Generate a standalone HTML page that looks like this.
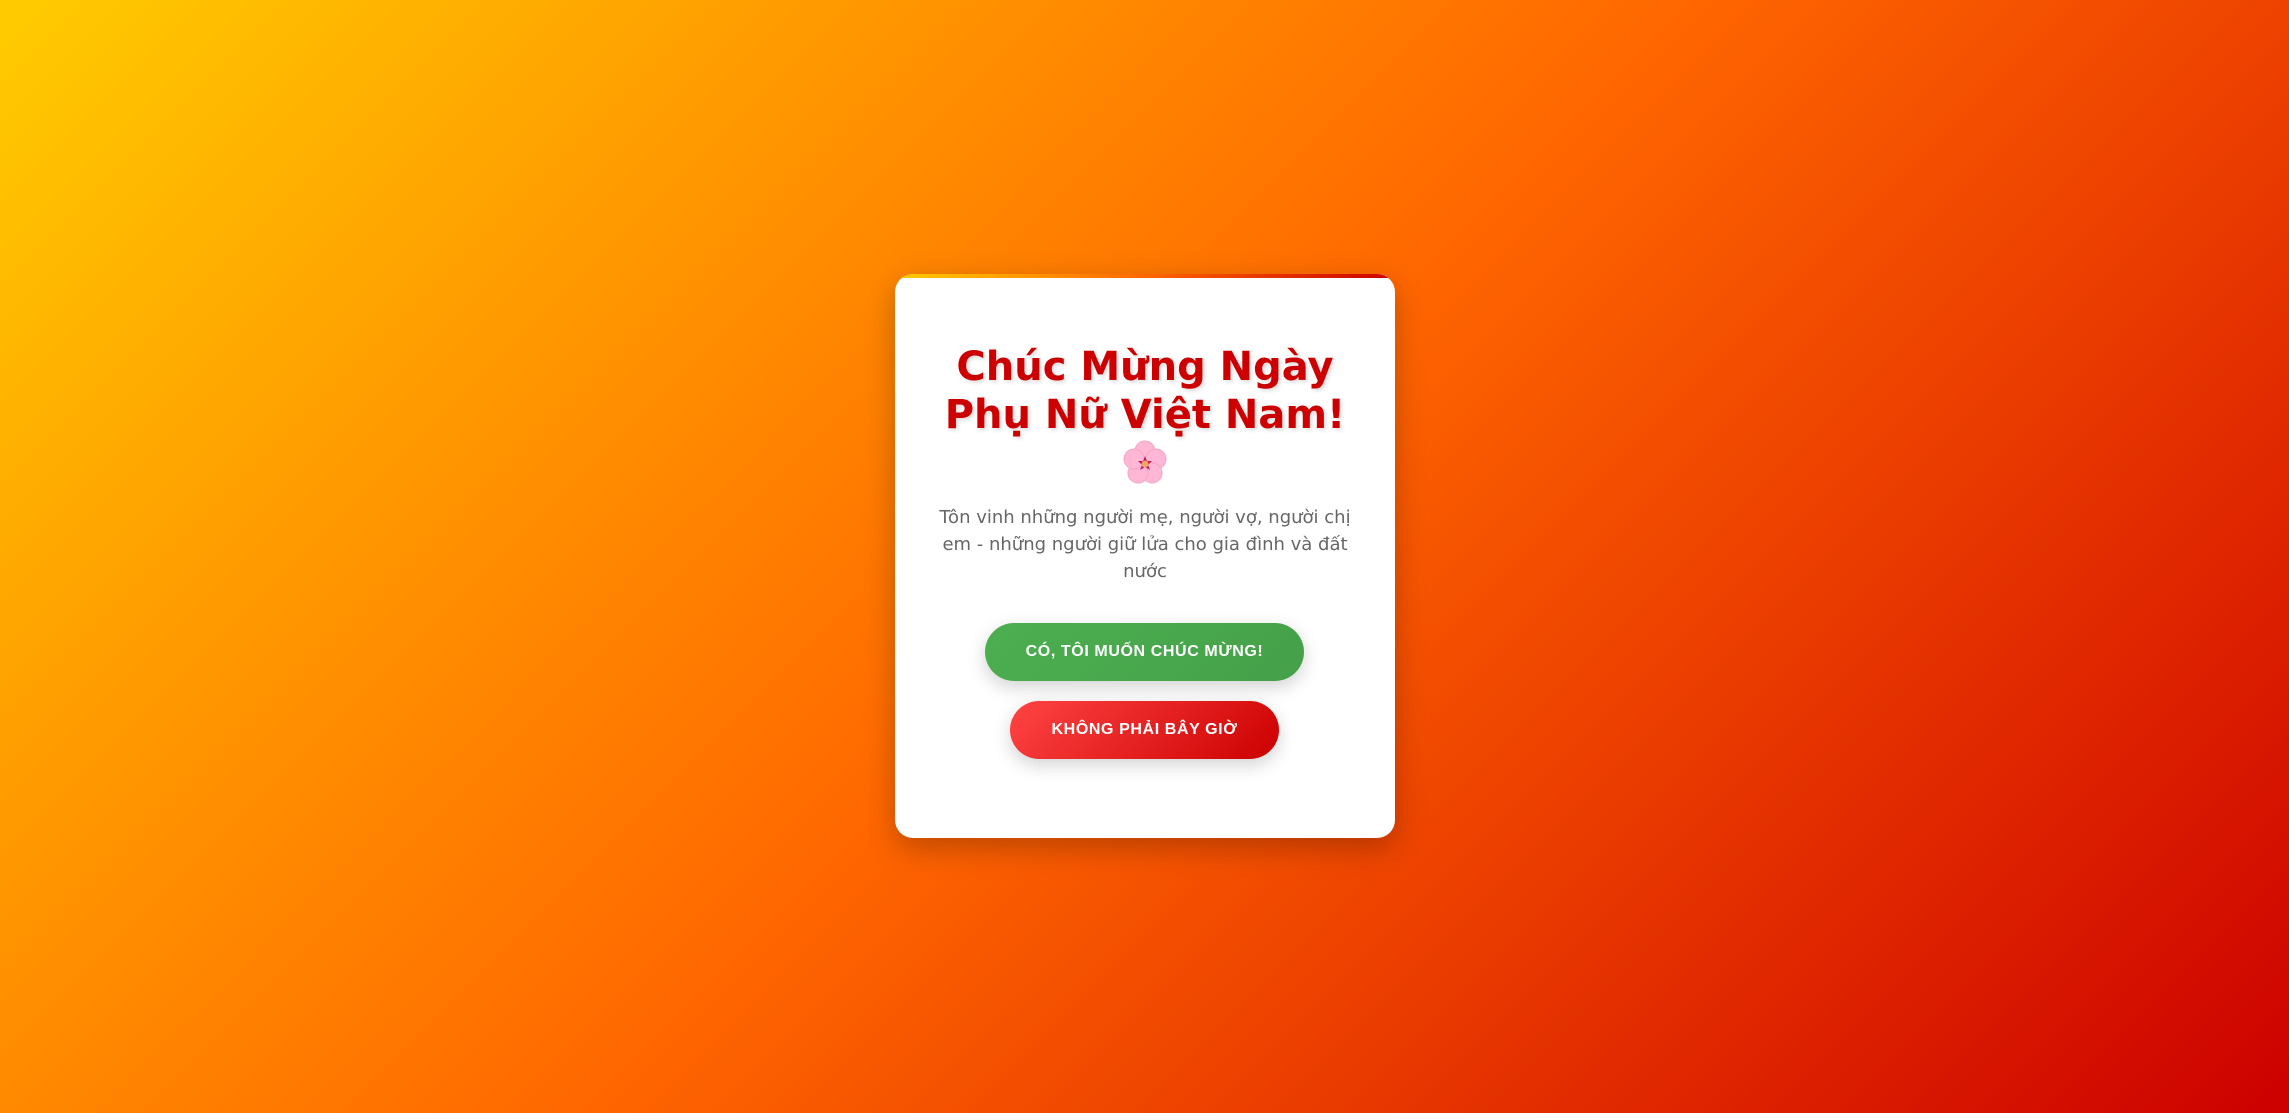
<!DOCTYPE html>
<html><head><meta charset="utf-8"><style>
html,body{margin:0;width:2289px;height:1113px;overflow:hidden}
body{background:linear-gradient(135deg,#ffcc00 0%,#ff6600 50%,#cc0000 100%);position:relative;font-family:"DejaVu Sans",sans-serif}
.card{position:absolute;left:895px;top:274px;width:500px;height:564px;background:#fff;border-radius:18px;box-shadow:0 10px 30px rgba(0,0,0,.25);overflow:hidden;text-align:center}
.bar{position:absolute;left:0;top:0;right:0;height:4px;background:linear-gradient(90deg,#ffcc00,#ff6600,#cc0000)}
h1{margin:0;position:absolute;top:69px;left:0;right:0;font-size:40px;line-height:48px;color:#cc0000;font-weight:bold;text-shadow:2px 2px 4px rgba(0,0,0,.15)}
.fl{position:absolute;left:227px;top:166px}
p{position:absolute;margin:0;top:230px;left:30px;right:30px;font-size:18px;line-height:27px;color:#666}
.btn{position:absolute;height:58px;border-radius:29px;color:#fff;font-family:"Liberation Sans",Arial,sans-serif;font-weight:bold;font-size:16px;letter-spacing:0.6px;line-height:58px;text-align:center;box-shadow:0 6px 18px rgba(0,0,0,.18)}
.g{left:90px;top:349px;width:319px;background:linear-gradient(135deg,#4caf50,#45a049)}
.r{left:115px;top:427px;width:269px;background:linear-gradient(135deg,#ff4444,#cc0000)}
</style></head><body>
<div class="card"><div class="bar"></div>
<h1>Chúc Mừng Ngày<br>Phụ Nữ Việt Nam!</h1>
<svg class="fl" width="46" height="46" viewBox="0 0 46 46">
<g fill="#ffb7d5" stroke="#f5a3c4" stroke-width="1">
<circle cx="23" cy="11" r="10"/><circle cx="34" cy="19" r="10"/><circle cx="30" cy="33" r="10"/><circle cx="16" cy="33" r="10"/><circle cx="12" cy="19" r="10"/></g>
<circle cx="23" cy="23" r="6" fill="#ffb7d5"/>
<path d="M23 16 L25 21 L30 21 L26 25 L28 30 L23 27 L18 30 L20 25 L16 21 L21 21Z" fill="#c2185b"/>
<circle cx="23" cy="24" r="3.5" fill="#f4a460"/>
</svg>
<p>Tôn vinh những người mẹ, người vợ, người chị em - những người giữ lửa cho gia đình và đất nước</p>
<div class="btn g">CÓ, TÔI MUỐN CHÚC MỪNG!</div>
<div class="btn r">KHÔNG PHẢI BÂY GIỜ</div>
</div>
</body></html>
